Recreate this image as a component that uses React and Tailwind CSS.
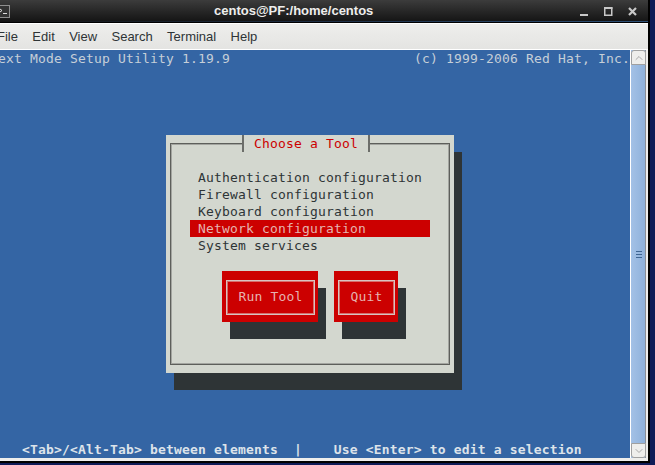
import React from "react";
import { ChevronUp, ChevronDown } from "lucide-react";

const mono = "font-['DejaVu_Sans_Mono','Liberation_Mono',monospace] text-[13px] tracking-[0.17px] leading-[17px] whitespace-pre";

const tools = [
  "Authentication configuration",
  "Firewall configuration",
  "Keyboard configuration",
  "Network configuration",
  "System services",
];

function TitleBar() {
  return (
    <div className="flex h-[22px] flex-col bg-gradient-to-b from-[#3c3c3c] to-[#141414]">
      <div className="flex flex-1 items-center">
        <div className="ml-[-3px] mt-[1px] flex h-[13px] w-[13px] items-center justify-center border border-[#8f8f8f] bg-[#333]">
          <svg width="9" height="7" viewBox="0 0 9 7">
            <path d="M1 1 L3 2.5 L1 4 M4 5.5 H8" fill="none" stroke="#ddd" strokeWidth="1" />
          </svg>
        </div>
        <div className="ml-[204px] font-['Liberation_Sans',sans-serif] text-[13px] font-bold text-[#eeeeec]">
          centos@PF:/home/centos
        </div>
        <div className="ml-auto mr-[11px] mt-[1px] flex items-center gap-[15px]">
          <svg width="9" height="9" viewBox="0 0 9 9">
            <rect x="0" y="7" width="8" height="2" fill="#c8c8c8" />
          </svg>
          <svg width="9" height="9" viewBox="0 0 9 9">
            <rect x="0.75" y="1" width="7" height="7.25" fill="none" stroke="#c8c8c8" strokeWidth="1.5" />
            <rect x="0" y="0" width="8.5" height="2" fill="#c8c8c8" />
          </svg>
          <svg width="9" height="9" viewBox="0 0 9 9">
            <path d="M1 1 L8 8 M8 1 L1 8" stroke="#c8c8c8" strokeWidth="2.2" />
          </svg>
        </div>
      </div>
      <div className="h-px bg-gradient-to-r from-[#141414] via-[#1f3047] to-[#2f5279]" />
    </div>
  );
}

function MenuBar() {
  const items = ["File", "Edit", "View", "Search", "Terminal", "Help"];
  return (
    <div className="flex h-[27px] items-center gap-[14.4px] border-y border-white bg-gradient-to-b from-[#eeeeec] to-[#e4e4e2] font-['Liberation_Sans',sans-serif] text-[13px] text-[#2e3436]">
      {items.map((item, i) => (
        <span key={item} className={i === 0 ? "ml-[-3px]" : ""}>
          {item}
        </span>
      ))}
    </div>
  );
}

function Button({ label, width }) {
  return (
    <div className={`${width} h-[51px] bg-[#cc0000] pl-[4px] pr-[3px] pt-[9px] shadow-[8px_17px_0_#2e3436]`}>
      <div className="flex h-[35px] items-center justify-center border border-[#d8c4c0] pb-[2px] text-[#e6b4b0] shadow-[inset_0_0_0_1px_#d66f6c]">
        {label}
      </div>
    </div>
  );
}

function Dialog() {
  return (
    <div className={`ml-[166px] mt-[68px] h-[238px] w-[288px] bg-[#d3d7cf] px-[4px] pb-[8px] shadow-[8px_17px_0_#2e3436] ${mono}`}>
      <fieldset className="h-[230px] border border-[#5d5f5b] px-[19px] shadow-[inset_1px_1px_0_#a3a5a0,inset_-1px_-1px_0_#a3a5a0]">
        <legend className="ml-[52px] border-x-2 border-[#6c6e6a] bg-[#d3d7cf] px-[10px] text-[#cc0000]">
          Choose a Tool
        </legend>
        <div className="mt-[17px] text-[#2e3436]">
          {tools.map((tool) =>
            tool === "Network configuration" ? (
              <div key={tool} className="w-[240px] bg-[#cc0000] pl-[8px] text-[#e6b4b0]">
                {tool}
              </div>
            ) : (
              <div key={tool} className="pl-[8px]">
                {tool}
              </div>
            )
          )}
        </div>
        <div className="mt-[17px] ml-[32px] flex gap-[16px]">
          <Button label="Run Tool" width="w-[96px]" />
          <Button label="Quit" width="w-[64px]" />
        </div>
      </fieldset>
    </div>
  );
}

function Terminal() {
  return (
    <div className="flex min-w-0 flex-1 flex-col overflow-hidden bg-[#3465a4]">
      <div className={`flex justify-between text-[#c6cfd8] ${mono}`}>
        <span className="ml-[-10px]">Text Mode Setup Utility 1.19.9</span>
        <span>(c) 1999-2006 Red Hat, Inc.</span>
      </div>
      <Dialog />
      <div className={`mt-auto pl-[22px] font-bold text-[#dde3ea] ${mono}`}>
        {"<Tab>/<Alt-Tab> between elements  |    Use <Enter> to edit a selection"}
      </div>
    </div>
  );
}

function Scrollbar() {
  return (
    <div className="flex w-[15px] flex-col bg-gradient-to-r from-[#a3c1e6] to-[#8db0da] shadow-[inset_-1px_0_0_#8a8f96]">
      <div className="flex h-[15px] items-center justify-center rounded-t-[3px] border border-[#a0a0a0] bg-[#eeeeec]">
        <ChevronUp size={12} strokeWidth={2} color="#a8a8a8" />
      </div>
      <div className="flex flex-1 items-center justify-center">
        <div className="flex flex-col gap-[2px]">
          <span className="block h-px w-[6px] bg-[#3f6592]" />
          <span className="block h-px w-[6px] bg-[#3f6592]" />
          <span className="block h-px w-[6px] bg-[#3f6592]" />
        </div>
      </div>
      <div className="flex h-[15px] items-center justify-center rounded-b-[3px] border border-[#a0a0a0] bg-[#eeeeec]">
        <ChevronDown size={12} strokeWidth={2} color="#a8a8a8" />
      </div>
    </div>
  );
}

export default function App() {
  return (
    <div className="h-[465px] w-[655px] overflow-hidden bg-[#0f1b57]">
      <div className="flex h-[463px] w-[650px] flex-col border-r-2 border-b-2 border-black">
        <TitleBar />
        <div className="h-px bg-black" />
        <MenuBar />
        <div className="flex min-h-0 flex-1 bg-[#eeeeec] pb-[3px] pr-[2px]">
          <Terminal />
          <div className="w-px bg-white" />
          <Scrollbar />
        </div>
      </div>
    </div>
  );
}
